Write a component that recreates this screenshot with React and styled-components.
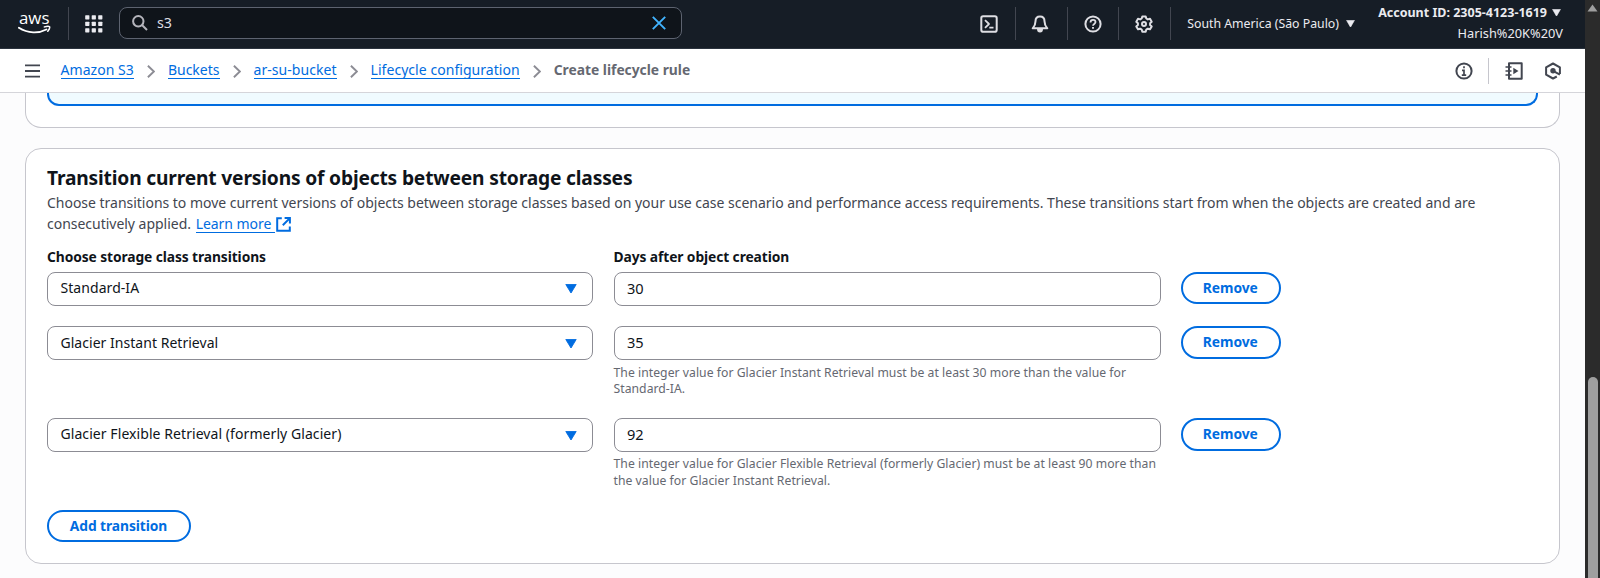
import React from 'react';
import styled, { createGlobalStyle } from 'styled-components';

const Global = createGlobalStyle`
  *, *::before, *::after { box-sizing: border-box; }
  body { margin: 0; overflow: hidden; background: #fcfcfd; }
  svg { display: block; flex: none; }
`;

const Window = styled.div`
  display: grid;
  grid-template-columns: 1585px 15px;
  width: 1600px;
  height: 578px;
  overflow: hidden;
  font-family: 'Noto Sans', 'Open Sans', sans-serif;
  font-size: 14px;
  color: #0f141a;
`;

const Page = styled.div`
  display: flex;
  flex-direction: column;
  min-width: 0;
  overflow: hidden;
  background: #fcfcfd;
`;

/* Global header */
const TopBar = styled.header`
  display: flex;
  align-items: flex-start;
  flex: none;
  height: 49px;
  padding: 7px 22px 0 18px;
  background: #161d26;
  border-bottom: 1px solid #2b333e;
  color: #ebebf0;
`;

const BarItem = styled.div`
  display: flex;
  align-items: center;
  justify-content: ${(p) => p.$justify || 'center'};
  width: ${(p) => p.$width}px;
  height: 33px;
  flex: none;
  padding-right: ${(p) => p.$inset || 0}px;
  border-right: ${(p) => (p.$divided ? '1px solid #424650' : 'none')};
`;

const SearchBox = styled.div`
  display: flex;
  align-items: center;
  width: 563px;
  height: 32px;
  padding: 0 15px 0 12px;
  border: 1.5px solid #5d6370;
  border-radius: 8px;
  background: #0f141a;
`;

const SearchText = styled.span`
  flex: 1;
  padding-left: 9px;
  font-size: 14.3px;
  line-height: 20px;
  color: #dedee3;
`;

const Spacer = styled.div`
  flex: 1;
`;

const Region = styled.div`
  display: flex;
  align-items: center;
  gap: 7px;
  height: 33px;
  margin-right: 25px;
  font-size: 12.3px;
  white-space: nowrap;
`;

const Account = styled.div`
  display: flex;
  flex-direction: column;
  align-items: flex-end;
  width: 183px;
  margin-top: -4.5px;
  white-space: nowrap;
  line-height: 20px;
`;

const AccountId = styled.div`
  display: flex;
  align-items: center;
  gap: 5px;
  padding-right: 2px;
  font-size: 12.5px;
  font-weight: 700;
`;

const UserName = styled.div`
  font-size: 12.8px;
`;

/* Breadcrumb bar */
const CrumbBar = styled.nav`
  display: flex;
  align-items: center;
  flex: none;
  height: 44px;
  padding: 0 23.5px 1px 25px;
  background: #fff;
  border-bottom: 1px solid #d5d5da;
`;

const MenuButton = styled.div`
  width: 35.5px;
  padding-top: 1px;
`;

const CrumbLink = styled.a`
  color: #006ce0;
  line-height: 16px;
  border-bottom: 1px solid #006ce0;
  letter-spacing: ${(p) => p.$track || 0}px;
  white-space: nowrap;
`;

const CrumbCurrent = styled.span`
  color: #656871;
  font-size: 13.8px;
  font-weight: 700;
  line-height: 16px;
  padding-bottom: 1px;
  white-space: nowrap;
`;

const CrumbArrow = styled.span`
  display: flex;
  padding: 2px 13px 0;
`;

const ToolGroup = styled.div`
  display: flex;
  align-items: center;
  padding-top: 1px;
`;

const ToolDivider = styled.span`
  width: 1px;
  height: 26px;
  margin: 0 16px 0 15px;
  background: #c6c6cd;
`;

/* Content */
const Content = styled.main`
  display: flex;
  flex-direction: column;
  gap: 20.5px;
  padding: 0 25px;
`;

const PreviousCard = styled.section`
  height: 34.5px;
  padding: 0 21px;
  background: #fff;
  border: 1px solid #c6c6cd;
  border-top: none;
  border-radius: 0 0 16px 16px;
`;

const InfoBox = styled.div`
  height: 12.7px;
  background: #f0fbff;
  border: 2px solid #006ce0;
  border-top: none;
  border-radius: 0 0 12px 12px;
`;

const Card = styled.section`
  height: 415.5px;
  padding: 17px 21px 0;
  background: #fff;
  border: 1px solid #c6c6cd;
  border-radius: 16px;
`;

const Title = styled.h2`
  margin: 0;
  font-size: 19.2px;
  font-weight: 700;
  line-height: 24px;
  letter-spacing: -0.17px;
`;

const Description = styled.p`
  margin: 2px 0 0;
  width: 1440px;
  line-height: 21px;
  letter-spacing: -0.02px;
  color: #424650;
`;

const LearnMore = styled.a`
  display: inline-flex;
  align-items: center;
  gap: 1px;
  margin-left: 1px;
  color: #006ce0;
`;

const LearnText = styled.span`
  height: 18px;
  padding-right: 4px;
  line-height: 18px;
  letter-spacing: -0.05px;
  border-bottom: 1px solid #006ce0;
`;

const Columns = styled.div`
  display: grid;
  grid-template-columns: 546px 547px auto;
  column-gap: 20.5px;
  justify-content: start;
  align-items: start;
`;

const Labels = styled(Columns)`
  margin-top: 13px;
  margin-bottom: 4.5px;
  font-size: 13.8px;
  font-weight: 700;
  line-height: 20px;
  letter-spacing: -0.09px;
`;

const Rows = styled.div`
  display: flex;
  flex-direction: column;
  gap: 20.5px;
`;

const Control = styled.div`
  display: flex;
  align-items: center;
  justify-content: space-between;
  height: 34px;
  padding: 0 15.5px 2px 12.5px;
  border: 1px solid #8c8c94;
  border-radius: 8px;
  background: #fff;
  letter-spacing: ${(p) => p.$track || 0}px;
`;

const CaretSlot = styled.span`
  padding-top: 3px;
`;

const NumberField = styled(Control)`
  padding-bottom: 1.500px;
  font-size: 14.6px;
`;

const Hint = styled.p`
  margin: 4.5px 0 0;
  font-size: 12.2px;
  line-height: 16.4px;
  letter-spacing: 0.037px;
  color: #656871;
`;

const PillButton = styled.button`
  width: ${(p) => p.$width}px;
  height: 32.7px;
  padding: 0 1px 1px 0;
  border: 2px solid #006ce0;
  border-radius: 17px;
  background: #fff;
  color: #006ce0;
  font-family: inherit;
  font-size: 13.8px;
  font-weight: 700;
  letter-spacing: -0.07px;
`;

const AddRow = styled.div`
  margin-top: 20.5px;
`;

/* Scrollbar */
const ScrollTrack = styled.div`
  display: flex;
  flex-direction: column;
  align-items: center;
  justify-content: space-between;
  padding-top: 4px;
  background: #2b2b2b;
`;

const ScrollThumb = styled.div`
  width: 10px;
  height: 201px;
  border-radius: 5px 5px 0 0;
  background: #9f9f9f;
`;

const Caret = ({ w, h, color }) => (
  <svg width={w} height={h} viewBox="0 0 12 10" preserveAspectRatio="none">
    <path d="M0.8 0.5h10.4L6 9.5z" fill={color} stroke={color} strokeWidth="0.9" strokeLinejoin="round" />
  </svg>
);

const AwsLogo = () => (
  <svg width="33" height="33" viewBox="0 0 33 33">
    <text x="16.2" y="16.6" textAnchor="middle" textLength="30.5" lengthAdjust="spacingAndGlyphs" fontFamily="'Open Sans', sans-serif" fontSize="17" fontWeight="500" fill="#fff">aws</text>
    <path d="M.9 20.800c9 5.800 19.800 5.800 27.500 1.700" fill="none" stroke="#fff" strokeWidth="1.900" strokeLinecap="round" />
    <path d="M26.400 19.900c2.200-.7 4.600-.8 5.100-.2.400.7-.2 2.700-1.700 4.600" fill="none" stroke="#fff" strokeWidth="1.500" strokeLinecap="round" />
  </svg>
);

const AppsIcon = () => (
  <svg width="18" height="18" viewBox="0 0 18 18" fill="#ebebf0">
    {[0, 6.5, 13].map((y) => [0, 6.5, 13].map((x) => <rect key={`${x}-${y}`} x={x + 0.2} y={y + 0.2} width="4.2" height="4.2" rx="0.6" />))}
  </svg>
);

const SearchIcon = () => (
  <svg width="16" height="16" viewBox="0 0 16 16" fill="none" stroke="#b4b4bb" strokeWidth="2">
    <circle cx="6.300" cy="6.300" r="5.200" />
    <path d="M10 10l5 5" />
  </svg>
);

const ClearIcon = () => (
  <svg width="14" height="14" viewBox="0 0 14 14" fill="none" stroke="#42b4ff" strokeWidth="1.900">
    <path d="M.8.8l12.400 12.400M13.200.8L.8 13.200" />
  </svg>
);

const LineIcon = ({ children, size = 18, color = '#dedee3' }) => (
  <svg width={size} height={size} viewBox="0 0 18 18" fill="none" stroke={color} strokeWidth="2" strokeLinejoin="round">
    {children}
  </svg>
);

const TerminalIcon = () => (
  <LineIcon>
    <rect x="1.300" y="1.300" width="15.400" height="15.400" rx="1.800" />
    <path d="M5 5.200L9 9l-4 3.800M9.300 12.600h4.200" strokeWidth="1.800" />
  </LineIcon>
);

const BellIcon = () => (
  <LineIcon>
    <path d="M9 1.500c-2.900 0-4.500 2-4.500 4.700 0 3.700-1.100 5.200-2.800 7.100h14.600c-1.700-1.900-2.800-3.400-2.800-7.100 0-2.700-1.600-4.700-4.500-4.700z" />
    <path d="M6 14a3 3.600 0 0 0 6 0z" fill="#dedee3" stroke="none" />
  </LineIcon>
);

const HelpIcon = () => (
  <LineIcon>
    <circle cx="9" cy="9" r="7.600" />
    <path d="M6.500 7.400c0-1.600 1.100-2.500 2.500-2.500s2.500.9 2.500 2.200c0 1.900-2.500 1.800-2.500 3.700" strokeWidth="1.800" />
    <path d="M9 11.900v1.800" strokeWidth="1.900" />
  </LineIcon>
);

const GearIcon = () => (
  <LineIcon>
    <path d="M7.300 1.400h3.400l.6 2.100 1.500.9 2.200-.6 1.700 2.900-1.600 1.500v1.700l1.600 1.500-1.700 2.900-2.200-.6-1.500.9-.6 2.100H7.300l-.6-2.100-1.500-.9-2.200.6-1.700-2.900 1.600-1.500V8.200L1.300 6.700 3 3.800l2.200.6 1.500-.9z" />
    <circle cx="9" cy="9" r="2" />
  </LineIcon>
);

const MenuIcon = () => (
  <svg width="15" height="14" viewBox="0 0 15 14" stroke="#424650" strokeWidth="1.900">
    <path d="M0 1.400h15M0 7h15M0 12.600h15" />
  </svg>
);

const ArrowIcon = () => (
  <svg width="8" height="13" viewBox="0 0 8 13" fill="none" stroke="#8c8c94" strokeWidth="1.900">
    <path d="M.9.8L6.900 6.500.9 12.200" />
  </svg>
);

const InfoIcon = () => (
  <LineIcon color="#424650">
    <circle cx="9" cy="9" r="7.600" />
    <path d="M9 4.300v2M7 8.300h2v5M6.800 13.100h4.400" strokeWidth="1.700" strokeLinejoin="miter" />
  </LineIcon>
);

const NotebookIcon = () => (
  <LineIcon color="#424650">
    <rect x="4" y="1.300" width="12.700" height="15.400" />
    <path d="M.5 5h6M.5 9h6M.5 13h6" strokeWidth="1.700" />
    <path d="M8.300 5.800v6.400l5.200-3.200z" fill="#424650" stroke="none" />
  </LineIcon>
);

const HexIcon = () => (
  <LineIcon color="#424650">
    <path d="M15.900 12V5.300L9 1.500 2.100 5.300v7.400L9 16.500l3.800-2" />
    <circle cx="9" cy="8.800" r="2.700" fill="#424650" stroke="none" />
    <path d="M9 8.800l6.900 3.800" />
  </LineIcon>
);

const ExternalIcon = () => (
  <svg width="15" height="15" viewBox="0 0 15 15" fill="none" stroke="#006ce0" strokeWidth="2">
    <path d="M5.800 1.200H1.200v12.600h12.600V9.500" />
    <path d="M8.600 1.100h5.300v5.300M13.600 1.400L6.800 8.200" />
  </svg>
);

const crumbs = [
  { text: 'Amazon S3', track: 0.05 },
  { text: 'Buckets', track: 0 },
  { text: 'ar-su-bucket', track: 0.05 },
  { text: 'Lifecycle configuration', track: 0.05 },
];

const transitions = [
  { name: 'Standard-IA', track: 0.06, days: 30 },
  {
    name: 'Glacier Instant Retrieval',
    track: 0.03,
    days: 35,
    hint: ['The integer value for Glacier Instant Retrieval must be at least 30 more than the value for', 'Standard-IA.'],
  },
  {
    name: 'Glacier Flexible Retrieval (formerly Glacier)',
    track: 0.07,
    days: 92,
    hint: ['The integer value for Glacier Flexible Retrieval (formerly Glacier) must be at least 90 more than', 'the value for Glacier Instant Retrieval.'],
  },
];

const HeaderBar = () => (
  <TopBar>
    <BarItem $width={51} $justify="flex-start" $divided><AwsLogo /></BarItem>
    <BarItem $width={50} $inset={1}><AppsIcon /></BarItem>
    <SearchBox>
      <SearchIcon />
      <SearchText>s3</SearchText>
      <ClearIcon />
    </SearchBox>
    <Spacer />
    <BarItem $width={52} $divided $inset={1}><TerminalIcon /></BarItem>
    <BarItem $width={52} $divided $inset={3}><BellIcon /></BarItem>
    <BarItem $width={51} $divided><HelpIcon /></BarItem>
    <BarItem $width={52} $divided $inset={1}><GearIcon /></BarItem>
    <BarItem $width={16} />
    <Region>
      South America (São Paulo)
      <Caret w={9} h={7.5} color="#ebebf0" />
    </Region>
    <Account>
      <AccountId>
        Account ID: 2305-4123-1619
        <Caret w={9} h={7.5} color="#ebebf0" />
      </AccountId>
      <UserName>Harish%20K%20V</UserName>
    </Account>
  </TopBar>
);

const Breadcrumbs = () => (
  <CrumbBar>
    <MenuButton><MenuIcon /></MenuButton>
    {crumbs.map((c) => (
      <React.Fragment key={c.text}>
        <CrumbLink $track={c.track}>{c.text}</CrumbLink>
        <CrumbArrow><ArrowIcon /></CrumbArrow>
      </React.Fragment>
    ))}
    <CrumbCurrent>Create lifecycle rule</CrumbCurrent>
    <Spacer />
    <ToolGroup>
      <InfoIcon />
      <ToolDivider />
      <NotebookIcon />
      <BarItem $width={21} />
      <HexIcon />
    </ToolGroup>
  </CrumbBar>
);

export default function App() {
  return (
    <Window>
      <Global />
      <Page>
        <HeaderBar />
        <Breadcrumbs />
        <Content>
          <PreviousCard><InfoBox /></PreviousCard>
          <Card>
            <Title>Transition current versions of objects between storage classes</Title>
            <Description>
              Choose transitions to move current versions of objects between storage classes based on your use case scenario and performance access requirements. These transitions start from when the objects are created and are
              <br />
              consecutively applied.{' '}
              <LearnMore><LearnText>Learn more</LearnText><ExternalIcon /></LearnMore>
            </Description>
            <Labels>
              <span>Choose storage class transitions</span>
              <span>Days after object creation</span>
            </Labels>
            <Rows>
              {transitions.map((t) => (
                <Columns key={t.name}>
                  <Control $track={t.track}>
                    {t.name}
                    <CaretSlot><Caret w={12} h={9.5} color="#006ce0" /></CaretSlot>
                  </Control>
                  <div>
                    <NumberField>{t.days}</NumberField>
                    {t.hint && <Hint>{t.hint[0]}<br />{t.hint[1]}</Hint>}
                  </div>
                  <PillButton $width={99.5}>Remove</PillButton>
                </Columns>
              ))}
            </Rows>
            <AddRow><PillButton $width={144}>Add transition</PillButton></AddRow>
          </Card>
        </Content>
      </Page>
      <ScrollTrack>
        <svg width="11" height="8" viewBox="0 0 11 8"><path d="M5.500.5L10.500 7.500H.5z" fill="#9f9f9f" /></svg>
        <ScrollThumb />
      </ScrollTrack>
    </Window>
  );
}
